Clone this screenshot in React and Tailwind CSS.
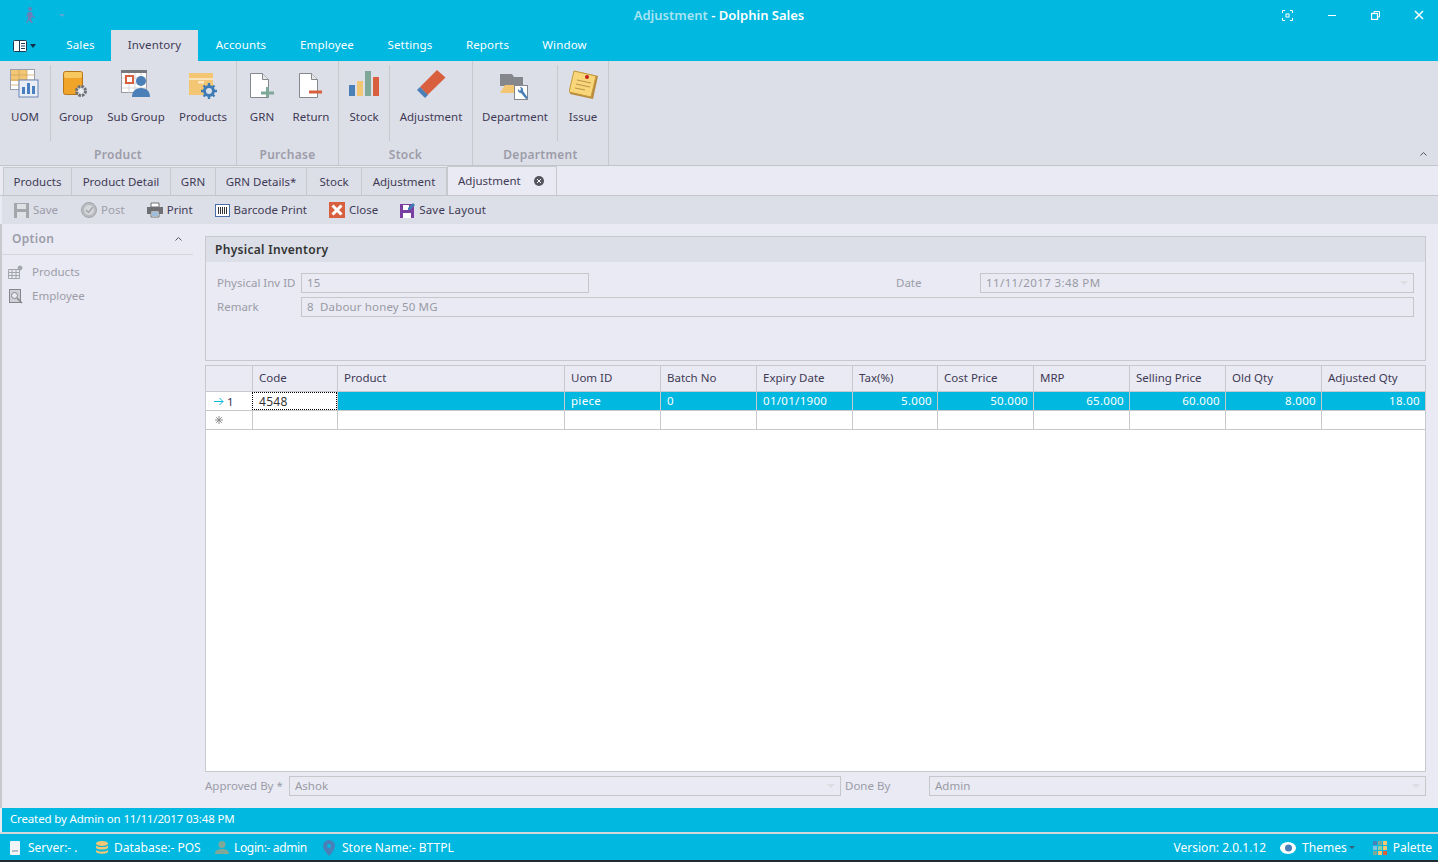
import React from 'react';

const font = { fontFamily: '"Noto Sans", sans-serif' };

const gridCols = 'grid grid-cols-[46px_85px_227px_96px_96px_96px_85px_96px_96px_96px_96px_1fr]';

const menuTabs = [
  { label: 'Sales', w: 'w-[61px]' },
  { label: 'Inventory', w: 'w-[87px]' },
  { label: 'Accounts', w: 'w-[86px]' },
  { label: 'Employee', w: 'w-[86px]' },
  { label: 'Settings', w: 'w-[80px]' },
  { label: 'Reports', w: 'w-[75px]' },
  { label: 'Window', w: 'w-[79px]' },
];

const docTabs = [
  { label: 'Products', w: 'w-[69px]' },
  { label: 'Product Detail', w: 'w-[99px]' },
  { label: 'GRN', w: 'w-[45px]' },
  { label: 'GRN Details*', w: 'w-[91px]' },
  { label: 'Stock', w: 'w-[55px]' },
  { label: 'Adjustment', w: 'w-[85px]' },
];

const columns = ['Code', 'Product', 'Uom ID', 'Batch No', 'Expiry Date', 'Tax(%)', 'Cost Price', 'MRP', 'Selling Price', 'Old Qty', 'Adjusted Qty'];

// Ribbon icons
const UomIcon = () => (
  <svg width="30" height="30" viewBox="0 0 30 30">
    <rect x=".5" y=".5" width="24" height="20" fill="#fff" stroke="#9a9fb0" />
    <rect x="1" y="1" width="16" height="11" fill="#f3c674" />
    <path d="M9 1v20M17 1v20M1 6h24M1 11h24M1 16h24" stroke="#c9a25e" strokeWidth="0.7" />
    <rect x="9" y="11" width="19" height="17" fill="#e8edf6" stroke="#6a86b5" />
    <path d="M12 18h3v7h-3zM17 14h3v11h-3zM22 17h3v8h-3z" fill="#4a7fc0" />
  </svg>
);

const GroupIcon = () => (
  <svg width="26" height="27" viewBox="0 0 26 27">
    <rect x=".5" y=".5" width="19" height="23" rx="2" fill="#f0a42a" stroke="#b8761a" />
    <rect x="1" y="1" width="18" height="6" rx="2" fill="#f8c860" />
    <circle cx="18" cy="20" r="4.500" fill="#e6e7ea" stroke="#6c6f78" strokeWidth="3" strokeDasharray="2.500 1" />
    <circle cx="18" cy="20" r="1.500" fill="#eceef3" />
  </svg>
);

const SubGroupIcon = () => (
  <svg width="30" height="28" viewBox="0 0 30 28">
    <rect x=".5" y=".5" width="25" height="22" fill="#fff" stroke="#9a9aa0" />
    <rect x="0" y="0" width="26" height="3" fill="#77787e" />
    <path d="M1 8h25M1 13h25M1 18h25M8 3v20M14 3v20M20 3v20" stroke="#c8c8cc" strokeWidth="0.7" />
    <rect x="5" y="6" width="7" height="7" fill="#fff" stroke="#d9603f" strokeWidth="2" />
    <circle cx="20" cy="11" r="5" fill="#4a7fb8" />
    <path d="M11 27c0-6 4-9 9-9s9 3 9 9z" fill="#4a7fb8" />
  </svg>
);

const ProductsIcon = () => (
  <svg width="29" height="27" viewBox="0 0 29 27">
    <rect x="0" y="0" width="24" height="22" fill="#f3c674" />
    <path d="M0 6h24" stroke="#fff" strokeWidth="1" />
    <rect x="9" y="8" width="6" height="2.500" fill="#fff" opacity="0.6" />
    <circle cx="20" cy="18" r="4.500" fill="#dcdfe8" stroke="#3f7cb6" strokeWidth="3" />
    <path d="M20 10v3M20 23v3M12 18h3M25 18h3M14.500 12.500l2 2M23.500 21.500l2 2M14.500 23.500l2-2M23.500 14.500l2-2" stroke="#3f7cb6" strokeWidth="2.400" />
  </svg>
);

const PageIcon = ({ children }) => (
  <svg width="24" height="25" viewBox="0 0 24 25">
    <path d="M.5.5h12l6 6v18H.5z" fill="#fff" stroke="#85878c" />
    <path d="M12.500.5v6h6" fill="#e7e7e7" stroke="#85878c" />
    {children}
  </svg>
);

const StockIcon = () => (
  <svg width="31" height="25" viewBox="0 0 31 25">
    <rect x="0" y="14" width="6" height="11" fill="#4a7fb8" />
    <rect x="8" y="10" width="6" height="15" fill="#f3c674" />
    <rect x="16" y="0" width="6" height="25" fill="#7fa898" />
    <rect x="24" y="6" width="6" height="19" fill="#d9603f" />
  </svg>
);

const EraserIcon = () => (
  <svg width="29" height="28" viewBox="0 0 29 28">
    <path d="M3 17L20 0l8.500 7.500-18 17.500z" fill="#d9603f" />
    <path d="M0 20l3-3 8 8-3 3z" fill="#4a7fb8" />
  </svg>
);

const DepartmentIcon = () => (
  <svg width="30" height="27" viewBox="0 0 30 27">
    <path d="M0 0h12l2 3h9v9H0z" fill="#85878c" />
    <path d="M0 19l5-8h17l-4 8H0z" fill="#f3c674" />
    <rect x="14.500" y="11.500" width="13" height="14" fill="#fff" stroke="#85878c" />
    <path d="M18 15a3 3 0 0 0 3 4l5 6 2-1-5-7a3 3 0 0 0-3-4l1 2-1 2z" fill="#4a7fb8" />
  </svg>
);

const IssueIcon = () => (
  <svg width="29" height="29" viewBox="0 0 29 29">
    <path d="M6 1l23 5-5 23L1 24z" fill="#b98a3d" />
    <path d="M5 1l22 5-5 21L0 22z" fill="#f8d679" stroke="#c49a3e" />
    <path d="M8 10l14 3M7 14l14 3M6 18l10 2" stroke="#a5853f" strokeWidth="0.8" />
    <circle cx="18" cy="7" r="2" fill="#c21f1f" />
  </svg>
);

const ribbonGroups = [
  {
    label: 'Product',
    w: 'w-[237px]',
    items: [
      { label: 'UOM', w: 'w-[51px]', icon: <UomIcon />, sep: true, top: 'pt-[4px]' },
      { label: 'Group', w: 'w-[50px]', icon: <GroupIcon />, top: 'pt-[6px]' },
      { label: 'Sub Group', w: 'w-[70px]', icon: <SubGroupIcon />, top: 'pt-[5px]' },
      { label: 'Products', w: 'w-[64px]', icon: <ProductsIcon />, top: 'pt-[8px]' },
    ],
  },
  {
    label: 'Purchase',
    w: 'w-[102px]',
    items: [
      {
        label: 'GRN',
        w: 'w-[50px]',
        top: 'pt-[8px]',
        icon: (
          <PageIcon>
            <path d="M11 20h13M17.500 14v10" stroke="#7fa898" strokeWidth="3" />
          </PageIcon>
        ),
      },
      {
        label: 'Return',
        w: 'w-[48px]',
        top: 'pt-[8px]',
        icon: (
          <PageIcon>
            <path d="M10 19h13" stroke="#d9603f" strokeWidth="3" />
          </PageIcon>
        ),
      },
    ],
  },
  {
    label: 'Stock',
    w: 'w-[134px]',
    items: [
      { label: 'Stock', w: 'w-[51px]', icon: <StockIcon />, sep: true, top: 'pt-[6px]' },
      { label: 'Adjustment', w: 'w-[82px]', icon: <EraserIcon />, top: 'pt-[5px]' },
    ],
  },
  {
    label: 'Department',
    w: 'w-[136px]',
    items: [
      { label: 'Department', w: 'w-[85px]', icon: <DepartmentIcon />, sep: true, top: 'pt-[9px]' },
      { label: 'Issue', w: 'w-[50px]', icon: <IssueIcon />, top: 'pt-[5px]' },
    ],
  },
];

const toolbarItems = [
  {
    label: 'Save',
    off: true,
    extra: 'mr-[1px]',
    icon: (
      <svg width="15" height="15" viewBox="0 0 15 15">
        <path d="M0 0h15v15H0z" fill="#a3a6ab" />
        <path d="M3 1h9v5H3z" fill="#dfe1e5" />
        <path d="M3 9h9v6H3z" fill="#dfe1e5" />
      </svg>
    ),
  },
  {
    label: 'Post',
    off: true,
    icon: (
      <svg width="16" height="16" viewBox="0 0 16 16">
        <circle cx="8" cy="8" r="7.500" fill="#b9bbbf" stroke="#a3a6ab" />
        <circle cx="8" cy="8" r="5" fill="#d5d7db" />
        <path d="M5 8l2.500 2.500L12 5" fill="none" stroke="#a3a6ab" strokeWidth="1.500" />
      </svg>
    ),
  },
  {
    label: 'Print',
    icon: (
      <svg width="16" height="16" viewBox="0 0 16 16">
        <path d="M4 1h8v4H4z" fill="#fff" stroke="#6e7075" />
        <path d="M0 5h16v7H0z" fill="#6e7075" />
        <path d="M4 9h8v6H4z" fill="#fff" stroke="#6e7075" />
        <path d="M5 11h6M5 13h6" stroke="#3f7cb6" />
      </svg>
    ),
  },
  {
    label: 'Barcode Print',
    icon: (
      <svg width="15" height="13" viewBox="0 0 15 13">
        <rect x="0.500" y="0.500" width="14" height="12" fill="#fff" stroke="#4a6fa8" />
        <path d="M3.500 3v7M5.500 3v7M7.500 3v7M9.500 3v7M11.500 3v7" stroke="#333" />
      </svg>
    ),
  },
  {
    label: 'Close',
    icon: (
      <svg width="16" height="16" viewBox="0 0 16 16">
        <rect width="16" height="16" fill="#d9603f" />
        <path d="M3.500 3.500l9 9M12.500 3.500l-9 9" stroke="#fff" strokeWidth="3" />
      </svg>
    ),
  },
  {
    label: 'Save Layout',
    text: 'tracking-[0.2px]',
    icon: (
      <svg width="15" height="16" viewBox="0 0 15 16">
        <path d="M0 2h12l2 2v12H0z" fill="#7a3fa0" />
        <path d="M3 3h6v5H3zM3 11h8v5H3z" fill="#fff" />
        <path d="M8 6l5-5 2 2-5 5H8z" fill="#3f7cb6" />
      </svg>
    ),
  },
];

function Field({ value, className }) {
  return (
    <div className={`h-[20px] border border-[#c6c7cb] pl-[5px] leading-[17px] text-[11.5px] tracking-[0.15px] text-[#9a9aa4] ${className}`}>{value}</div>
  );
}

function DropField({ value, className, textClass = '' }) {
  return (
    <div className={`flex h-[20px] items-center justify-between border border-[#c6c7cb] px-[5px] text-[11.5px] text-[#9a9aa4] ${className}`}>
      <span className={textClass}>{value}</span>
      <span className="border-x-[4px] border-t-[4px] border-x-transparent border-t-[#dcdde2]" />
    </div>
  );
}

function GridRow({ cells, selected }) {
  return (
    <div className={`${gridCols} h-[19px] border-b border-[#c8c8cc] leading-[17px] ${selected ? 'tracking-[0.3px]' : ''}`}>
      {cells.map((cell, i) => {
        if (i === 0) {
          return (
            <div key={i} className="flex items-center bg-white pl-[8px] text-[#3a2f5a]">
              {selected ? (
                <svg className="mr-[3px]" width="10" height="9" viewBox="0 0 10 9" fill="none" stroke="#00b8e0">
                  <path d="M0 4.500h9M5.500 1l3.500 3.500L5.500 8" />
                </svg>
              ) : (
                <svg className="ml-[1px]" width="8" height="8" viewBox="0 0 8 8" fill="none" stroke="#8c8c8c">
                  <path d="M4 0v8M0 4h8M1.200 1.200l5.600 5.600M6.800 1.200L1.200 6.800" />
                </svg>
              )}
              {selected ? '1' : ''}
            </div>
          );
        }
        const isCode = selected && i === 1;
        return (
          <div
            key={i}
            className={`truncate border-l border-[#c8c8cc] pl-[6px] pr-[5px] ${isCode ? 'border border-dotted !border-black bg-white pt-[1px] text-[12px] leading-[16px] text-[#333]' : selected ? 'bg-[#00b8e0] text-white' : 'bg-white'} ${cell.right ? 'text-right' : ''}`}
          >
            {cell.text}
          </div>
        );
      })}
    </div>
  );
}

const row1 = [
  {},
  { text: '4548' },
  { text: '' },
  { text: 'piece' },
  { text: '0' },
  { text: '01/01/1900' },
  { text: '5.000', right: true },
  { text: '50.000', right: true },
  { text: '65.000', right: true },
  { text: '60.000', right: true },
  { text: '8.000', right: true },
  { text: '18.00', right: true },
];

export default function App() {
  return (
    <div style={font} className="flex h-[862px] w-[1438px] flex-col overflow-hidden bg-[#e9eaf3] text-[11.5px] text-[#3f3a55]">
      {/* Title bar */}
      <div className="relative flex h-[30px] shrink-0 items-center bg-[#00b8e0] pl-[24px]">
        <svg width="12" height="16" viewBox="0 0 12 16" fill="#6a80b8">
          <circle cx="6" cy="2" r="2" />
          <path d="M4 5h4l1 4 2 1v1l-3-1-1 2 2 4H7l-2-3-2 3H2l2-5 0-3-1 2H2z" />
        </svg>
        <span className="ml-[23px] border-x-[3px] border-t-[3px] border-x-transparent border-t-[#5fa8d0]" />
        <div className="absolute inset-x-0 top-[7px] text-center text-[13px] font-semibold leading-[17px] text-white">
          <span className="text-[#a8e4f3]">Adjustment</span>
          <span> - Dolphin Sales</span>
        </div>
        <div className="ml-auto flex items-center gap-[34px] pr-[14px]">
          <svg width="11" height="11" viewBox="0 0 11 11" fill="none" stroke="#fff">
            <path d="M.5 3V.5H3M8 .5h2.500V3M10.500 8v2.500H8M3 10.500H.5V8" />
            <rect x="4" y="4" width="3" height="3" />
          </svg>
          <svg width="10" height="11" viewBox="0 0 10 11" fill="none" stroke="#fff"><path d="M1 5.500h8" /></svg>
          <svg width="9" height="9" viewBox="0 0 9 9" fill="none" stroke="#fff">
            <rect x=".5" y="2.500" width="6" height="6" strokeWidth="1.300" />
            <path d="M3 2.500V.5h5.500V6H6.500" />
          </svg>
          <svg width="10" height="10" viewBox="0 0 10 10" fill="none" stroke="#fff" strokeWidth="1.500">
            <path d="M1 1l8 8M9 1l-8 8" />
          </svg>
        </div>
      </div>

      {/* Menu tabs */}
      <div className="flex h-[31px] shrink-0 items-stretch bg-[#00b8e0]">
        <div className="flex w-[50px] items-center pl-[13px]">
          <svg width="14" height="12" viewBox="0 0 14 12">
            <rect x=".5" y=".5" width="13" height="11" rx="1" fill="#fff" stroke="#1d3b55" />
            <path d="M6.500 1v10" stroke="#1d3b55" />
            <path d="M8 3.500h4M8 6h4M8 8.500h4" stroke="#1d3b55" />
          </svg>
          <span className="ml-[3px] border-x-[3px] border-t-[4px] border-x-transparent border-t-[#12304a]" />
        </div>
        {menuTabs.map((t) => (
          <div
            key={t.label}
            className={`${t.w} flex items-center justify-center pb-[2px] tracking-[0.15px] ${t.label === 'Inventory' ? 'bg-[#dcdfe8] text-[#3f3a55]' : 'text-white'}`}
          >
            {t.label}
          </div>
        ))}
      </div>

      {/* Ribbon */}
      <div className="relative flex h-[105px] shrink-0 border-b border-[#c4c5cb] bg-[#dcdfe8]">
        {ribbonGroups.map((g) => (
          <div key={g.label} className={`${g.w} flex shrink-0 flex-col border-r border-[#c8c9ce]`}>
            <div className="flex h-[84px] pb-[4px] pt-[4px]">
              {g.items.map((it) => (
                <div
                  key={it.label}
                  className={`${it.w} relative flex shrink-0 flex-col items-center ${it.sep ? 'border-r border-[#c8c9ce]' : ''}`}
                >
                  <div className={`h-[44px] ${it.top}`}>{it.icon}</div>
                  <div className="whitespace-nowrap leading-[16px]">{it.label}</div>
                </div>
              ))}
            </div>
            <div className="flex-1 pt-[1px] text-center text-[12px] font-semibold leading-[18px] tracking-[0.3px] text-[#9c9ca8]">{g.label}</div>
          </div>
        ))}
        <svg className="absolute bottom-[9px] right-[11px]" width="7" height="4" viewBox="0 0 7 4" fill="none" stroke="#55555f">
          <path d="M.5 3.500l3-3 3 3" />
        </svg>
      </div>

      {/* Document tabs */}
      <div className="mt-[1px] flex h-[29px] shrink-0 items-end border-b border-[#c4c5cb] bg-[#e9eaf3] pl-[3px]">
        {docTabs.map((t, i) => (
          <div key={t.label} className={`${t.w} flex h-[28px] items-center justify-center border-r border-t border-[#c8c9ce] bg-[#dcdfe8] ${i === 0 ? 'border-l' : ''}`}>
            {t.label}
          </div>
        ))}
        <div className="flex h-[29px] w-[110px] items-center border-x border-t border-[#c8c9ce] bg-[#e9eaf3] pl-[10px]">
          Adjustment
          <svg className="ml-[13px]" width="10" height="10" viewBox="0 0 10 10">
            <circle cx="5" cy="5" r="5" fill="#55555f" />
            <path d="M3 3l4 4M7 3l-4 4" stroke="#fff" />
          </svg>
        </div>
      </div>

      {/* Toolbar */}
      <div className="ml-[2px] flex h-[28px] shrink-0 items-center gap-[22px] bg-[#dcdfe8] pl-[12px]">
        {toolbarItems.map((it) => (
          <div key={it.label} className={`flex items-center gap-[4px] ${it.off ? 'text-[#9c9ca8]' : ''} ${it.extra || ''}`}>
            {it.icon}
            <span className={it.text || ''}>{it.label}</span>
          </div>
        ))}
      </div>

      {/* Body */}
      <div className="flex min-h-0 flex-1 border-l-2 border-[#c8c9ce]">
        {/* Left options panel */}
        <div className="w-[191px] shrink-0">
          <div className="flex h-[31px] items-center justify-between border-b border-[#d4d5da] pl-[10px] pr-[11px]">
            <span className="text-[12px] font-semibold tracking-[0.3px] text-[#9c9ca8]">Option</span>
            <svg width="7" height="4" viewBox="0 0 7 4" fill="none" stroke="#55555f">
              <path d="M.5 3.500l3-3 3 3" />
            </svg>
          </div>
          <div className="mt-[5px] flex flex-col text-[#9c9ca8]">
            <div className="flex h-[24px] items-center gap-[9px] pl-[6px]">
              <svg width="15" height="15" viewBox="0 0 15 15" fill="none" stroke="#a3a6ab">
                <path d="M.5 4.500h11v9H.5zM.5 7.500h11M.5 10.500h11M4 4.500v9M8 4.500v9" />
                <circle cx="12" cy="3" r="2" fill="#a3a6ab" />
              </svg>
              Products
            </div>
            <div className="flex h-[24px] items-center gap-[9px] pl-[6px]">
              <svg width="15" height="15" viewBox="0 0 15 15" fill="none" stroke="#85878c">
                <rect x="1.500" y=".5" width="11" height="13" fill="#cfd0d6" />
                <circle cx="6.500" cy="6.500" r="3" fill="#e9eaf3" />
                <path d="M9 9l5 5" strokeWidth="1.500" />
              </svg>
              Employee
            </div>
          </div>
        </div>

        {/* Main panel */}
        <div className="flex min-w-0 flex-1 flex-col pl-[12px] pr-[12px] pt-[12px]">
          <div className="h-[125px] shrink-0 border border-[#c8c9ce]">
            <div className="flex h-[25px] items-center bg-[#dcdfe8] pl-[9px] text-[12px] font-semibold tracking-[0.3px] text-[#333]">Physical Inventory</div>
            <div className="flex flex-col gap-[4px] pt-[11px] text-[#9c9ca8]">
              <div className="flex items-center">
                <span className="w-[95px] shrink-0 pl-[11px]">Physical Inv ID</span>
                <Field value="15" className="w-[288px]" />
                <span className="ml-[307px] w-[84px] shrink-0">Date</span>
                <DropField value="11/11/2017 3:48 PM" textClass="tracking-[0.4px]" className="mr-[11px] flex-1" />
              </div>
              <div className="flex items-center">
                <span className="w-[95px] shrink-0 pl-[11px]">Remark</span>
                <Field value="8  Dabour honey 50 MG" className="mr-[11px] flex-1 whitespace-pre" />
              </div>
            </div>
          </div>

          {/* Grid */}
          <div className="mt-[4px] flex min-h-0 flex-1 flex-col border border-[#c8c9ce] bg-white">
            <div className={`${gridCols} h-[26px] shrink-0 border-b border-[#c8c9ce] bg-[#e9eaf3]`}>
              <div />
              {columns.map((c) => (
                <div key={c} className="flex items-center truncate border-l border-[#c8c9ce] pb-[2px] pl-[6px]">{c}</div>
              ))}
            </div>
            <GridRow cells={row1} selected />
            <GridRow cells={Array.from({ length: 12 }, () => ({}))} />
          </div>

          {/* Approval row */}
          <div className="mt-[4px] flex h-[20px] shrink-0 items-center text-[#9c9ca8]">
            <span className="w-[84px] shrink-0">Approved By *</span>
            <DropField value="Ashok" className="w-[552px]" />
            <span className="ml-[4px] w-[84px] shrink-0">Done By</span>
            <DropField value="Admin" className="flex-1" />
          </div>
          <div className="h-[12px] shrink-0" />
        </div>
      </div>

      {/* Status strip */}
      <div className="ml-[2px] flex h-[24px] shrink-0 items-center bg-[#00b8e0] pb-[3px] pl-[8px] tracking-[-0.15px] text-white">
        Created by Admin on 11/11/2017 03:48 PM
      </div>
      <div className="h-[2px] shrink-0 bg-[#d5d6dc]" />

      {/* Footer bar */}
      <div className="flex h-[26px] shrink-0 items-center bg-[#00b8e0] pl-[10px] pr-[6px] pt-[1px] text-[12px] text-white">
        <svg width="10" height="14" viewBox="0 0 10 14">
          <rect width="10" height="14" rx="1" fill="#f2f4f7" />
          <path d="M2 10h6" stroke="#7a8a9a" />
        </svg>
        <span className="ml-[8px] w-[50px]">Server:- .</span>
        <svg className="ml-[18px]" width="12" height="13" viewBox="0 0 12 13" fill="#f3c674">
          <ellipse cx="6" cy="2.500" rx="6" ry="2.500" />
          <path d="M0 4.500c2 2 10 2 12 0V7c-2 2-10 2-12 0zM0 9c2 2 10 2 12 0v1.500c0 3-12 3-12 0z" />
        </svg>
        <span className="ml-[6px] w-[85px] whitespace-nowrap">Database:- POS</span>
        <svg className="ml-[16px]" width="14" height="13" viewBox="0 0 14 13" fill="#7fa898">
          <circle cx="7" cy="3.500" r="3.500" />
          <path d="M0 13c0-4 3-5 7-5s7 1 7 5z" />
        </svg>
        <span className="ml-[5px] w-[73px] whitespace-nowrap tracking-[-0.35px]">Login:- admin</span>
        <svg className="ml-[16px]" width="12" height="16" viewBox="0 0 12 16">
          <path d="M6 0a6 6 0 0 1 6 6c0 4-6 10-6 10S0 10 0 6a6 6 0 0 1 6-6z" fill="#4a7fb8" />
          <circle cx="6" cy="6" r="2" fill="#00b8e0" />
        </svg>
        <span className="ml-[7px]">Store Name:- BTTPL</span>
        <div className="ml-auto flex items-center">
          <span>Version: 2.0.1.12</span>
          <svg className="ml-[14px]" width="16" height="12" viewBox="0 0 16 12">
            <ellipse cx="8" cy="6" rx="8" ry="6" fill="#fff" />
            <circle cx="8.500" cy="6" r="3.500" fill="#4a7fb8" />
          </svg>
          <span className="ml-[6px]">Themes</span>
          <span className="ml-[2px] border-x-[3px] border-t-[3px] border-x-transparent border-t-[#2f5f7a]" />
          <div className="ml-[18px] grid grid-cols-3 gap-[1px]">
            {['#4a7fb8', '#7fa898', '#f3c674', '#7fc4e0', '#8fd0a0', '#f3c674', '#7fa898', '#f3c674', '#d9603f'].map((c, i) => (
              <span key={i} style={{ background: c }} className="h-[4px] w-[4px]" />
            ))}
          </div>
          <span className="ml-[6px]">Palette</span>
        </div>
      </div>
      <div className="h-[2px] shrink-0 bg-[#1f2a33]" />
    </div>
  );
}
